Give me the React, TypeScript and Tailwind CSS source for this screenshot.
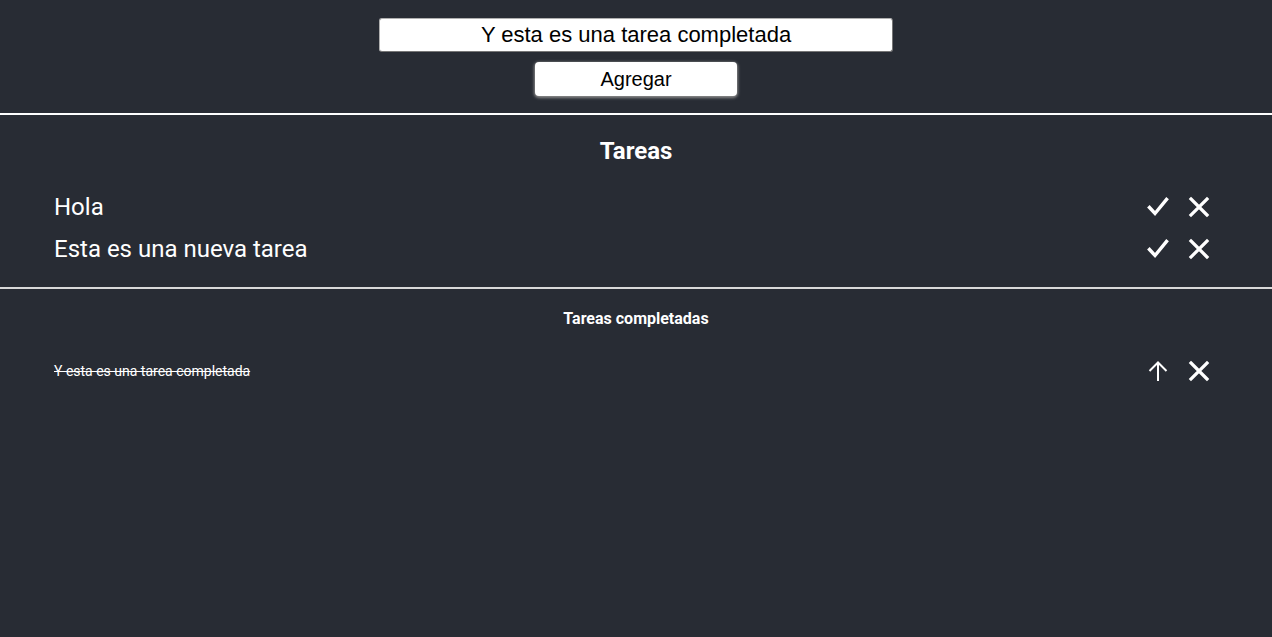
function CheckIcon() {
  return (
    <svg width="22" height="22" viewBox="0 0 22 22" fill="none" stroke="white" strokeWidth="3.4" strokeLinecap="square">
      <path d="M2.5 11.5 L8 17.5 L19.5 3.5" />
    </svg>
  );
}

function CloseIcon() {
  return (
    <svg width="22" height="22" viewBox="0 0 22 22" fill="none" stroke="white" strokeWidth="3.2" strokeLinecap="square">
      <path d="M3 3 L19 19 M19 3 L3 19" />
    </svg>
  );
}

function UpIcon() {
  return (
    <svg width="22" height="22" viewBox="0 0 22 22" fill="none" stroke="white" strokeWidth="2">
      <path d="M11 21 V2.5 M2.5 11 L11 2.5 L19.5 11" />
    </svg>
  );
}

const pendientes = ['Hola', 'Esta es una nueva tarea'];
const completadas = ['Y esta es una tarea completada'];

export default function App() {
  return (
    <div className="min-h-screen bg-[#282c34] text-white font-['Roboto',sans-serif]">
      {/* Formulario */}
      <form className="flex flex-col items-center gap-[10px] pt-[18px] pb-[17px]" onSubmit={(e) => e.preventDefault()}>
        <input
          className="w-[514px] h-[34px] bg-white text-black text-center text-[22px] font-['Liberation_Sans',Arial,sans-serif] rounded-[3px] border border-[#767676] border-t-[#b0b0b0] border-l-[#b0b0b0] outline-none"
          defaultValue="Y esta es una tarea completada"
        />
        <button className="w-[202px] h-[34px] bg-white text-black text-[20px] font-['Liberation_Sans',Arial,sans-serif] rounded-[4px] shadow-[0_1px_3px_1px_#8a8a8a]">
          Agregar
        </button>
      </form>

      <hr className="border-0 h-[2px] bg-white" />

      {/* Tareas */}
      <section className="pt-[22px] pb-[24px]">
        <h2 className="text-center font-bold text-[24px] leading-[28px]">Tareas</h2>
        <ul className="mt-[28px] flex flex-col gap-[14px] pl-[54px] pr-[62px]">
          {pendientes.map((t) => (
            <li key={t} className="flex items-center justify-between h-[28px]">
              <span className="text-[24px] leading-[28px]">{t}</span>
              <div className="flex items-center gap-[19px]">
                <CheckIcon />
                <CloseIcon />
              </div>
            </li>
          ))}
        </ul>
      </section>

      <hr className="border-0 h-[2px] bg-[#d9d9d9]" />

      {/* Completadas */}
      <section className="pt-[20px]">
        <h3 className="text-center font-bold text-[16px] leading-[20px]">Tareas completadas</h3>
        <ul className="mt-[30px] flex flex-col pl-[54px] pr-[62px]">
          {completadas.map((t) => (
            <li key={t} className="flex items-center justify-between h-[24px]">
              <span className="text-[14px] line-through">{t}</span>
              <div className="flex items-center gap-[19px]">
                <UpIcon />
                <CloseIcon />
              </div>
            </li>
          ))}
        </ul>
      </section>
    </div>
  );
}
